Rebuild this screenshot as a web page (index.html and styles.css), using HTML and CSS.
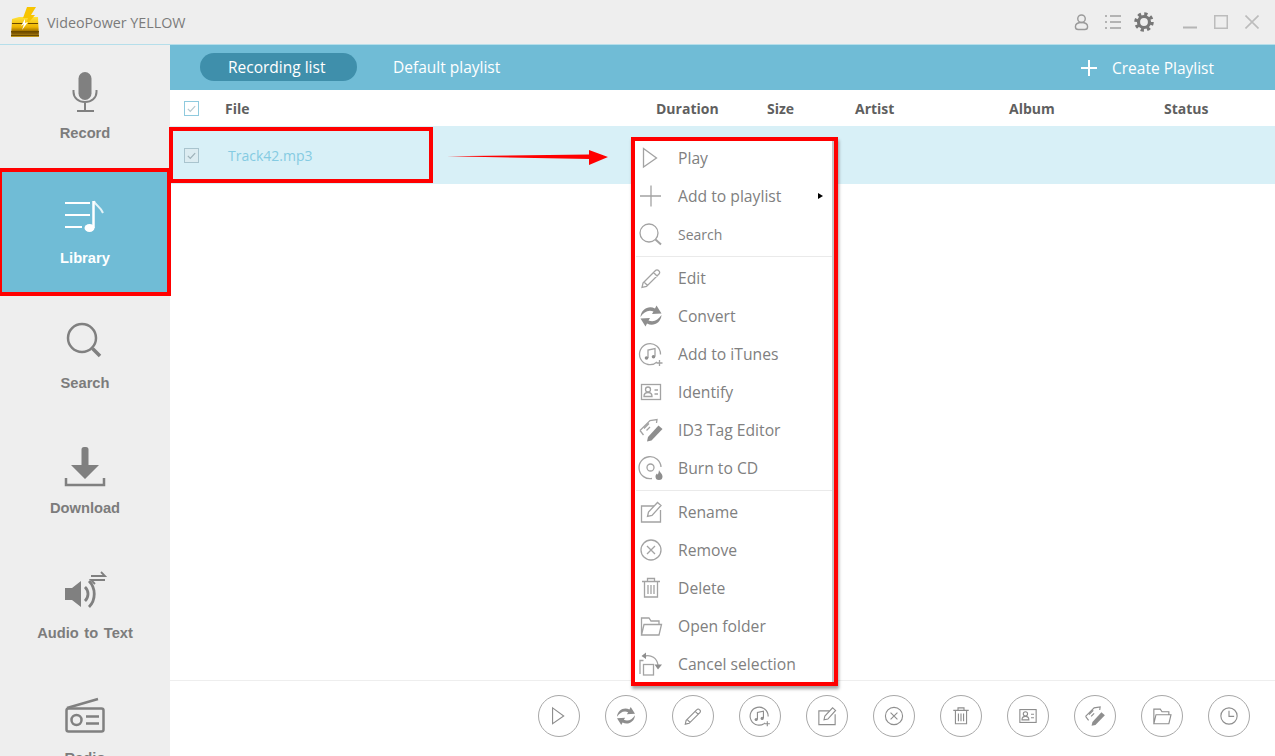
FILE: index.html
```html
<!DOCTYPE html>
<html lang="en">
<head>
<meta charset="utf-8">
<title>VideoPower YELLOW</title>
<link rel="stylesheet" href="styles.css">
</head>
<body>
<svg class="sprite" aria-hidden="true">
  <defs>
    <linearGradient id="gold" x1="0" y1="0" x2="0" y2="1">
      <stop offset="0" stop-color="#ffe23a"/><stop offset=".5" stop-color="#eeb400"/><stop offset=".8" stop-color="#7a5200"/><stop offset="1" stop-color="#c9a020"/>
    </linearGradient>
  </defs>
  <symbol id="i-play" viewBox="0 0 28 28"><path d="M6.500 4.500 19.500 14 6.500 23Z"/></symbol>
  <symbol id="i-plus" viewBox="0 0 28 28"><path d="M3 14H24M14 3.500V24.500"/></symbol>
  <symbol id="i-search" viewBox="0 0 28 28"><circle cx="12" cy="13" r="9"/><path d="M18.500 19.500 24 24.500" stroke-width="2"/></symbol>
  <symbol id="i-edit" viewBox="0 0 28 28"><path d="M6 19 18.500 6.500a2 2 0 0 1 3 0l.5.500a2 2 0 0 1 0 3L9.500 22.500 5 23.500ZM16.500 8.500l4 4M7 18l3.500 3.500"/></symbol>
  <symbol id="i-convert" viewBox="0 0 28 28"><path class="solid" d="M3.500 15C4 7 12 3 18 6.500L19.500 3.500 24.500 11.500 15 12 16.500 9.500C11 7.500 7 10 3.500 15ZM24.500 13C24 21 16 25 10 21.500L8.500 24.500 3.500 16.500 13 16 11.500 18.500C17 20.500 21 18 24.500 13Z"/></symbol>
  <symbol id="i-itunes" viewBox="0 0 28 28"><path d="M20 22A10.500 10.500 0 1 1 23.500 14.500"/><path d="M11 18V10L18 8.500V16.500"/><circle class="solid" cx="9.500" cy="18" r="1.800"/><circle class="solid" cx="16.500" cy="16.800" r="1.800"/><path d="M22.500 20V26M19.500 23H25.500"/></symbol>
  <symbol id="i-identify" viewBox="0 0 28 28"><rect x="4.500" y="6.500" width="19" height="15"/><circle cx="11" cy="11.500" r="2.500"/><path d="M7 18.500c0-3 2-4 4-4s4 1 4 4ZM17.500 12H21M17.500 16H21"/></symbol>
  <symbol id="i-id3" viewBox="0 0 28 28"><path d="M3 14.500 13 4.500 20 3.500 19.500 7M6.500 19 3 14.500M7 12.500l5-5M9.500 14.500l3.500-3.500"/><path class="solid" d="M10 25.500 11 21 21.500 9.500 25.500 13 14.500 24.500Z"/></symbol>
  <symbol id="i-burn" viewBox="0 0 28 28"><path d="M15 24.500A11 11 0 1 1 24 13"/><circle cx="13.500" cy="13.500" r="3.500"/><path class="solid" d="M22 16c.5 2 3.500 3.500 3.500 6.500a3.500 3.500 0 0 1-7 0c0-1.500.8-2.500 1.500-3l.8 1.200C21.500 19 22 17.500 22 16Z"/></symbol>
  <symbol id="i-rename" viewBox="0 0 28 28"><path d="M17 8H4.500V24H23.500V12"/><path d="M10.500 18.500 11.500 14 20.500 4.500 24 7.500 15 17.500Z"/></symbol>
  <symbol id="i-remove" viewBox="0 0 28 28"><circle cx="14" cy="14" r="10"/><path d="M10 10 18 18M18 10 10 18"/></symbol>
  <symbol id="i-delete" viewBox="0 0 28 28"><path d="M7.500 8V23H20.500V8M5 7.500H23M10.500 7V4.500H17.500V7M11 11V20M14 11V20M17 11V20"/></symbol>
  <symbol id="i-folder" viewBox="0 0 28 28"><path d="M4.500 23V6H12L14 9H22V12.500M4.500 23H22L24.500 12.500H7L4.500 23Z"/></symbol>
  <symbol id="i-cancel" viewBox="0 0 28 28"><rect x="6.500" y="14.500" width="10" height="10.500"/><path d="M3 24V10.500H6.500M8 6C14 4.500 20 8 21 15"/><path class="solid" d="M9 2.500V9L4.500 6ZM17.500 14.500H25L21 19.500Z"/></symbol>
  <symbol id="i-clock" viewBox="0 0 28 28"><circle cx="14" cy="14" r="9.500"/><path d="M14 8V14.500H20"/></symbol>
</svg>

<header class="titlebar">
  <svg class="logo" viewBox="0 0 30 30">
    <path fill="url(#gold)" d="M2 12 9 10 28 10 29 30H1Z"/>
    <path fill="#6b4a00" d="M1 24H29V25.500H1ZM1 28H29V29H1ZM2 16H28V17H2Z"/>
    <path fill="#f7c400" d="M17 0H26L21 8H25L15 20 18 11H13Z"/>
    <path fill="#fff" d="M15 12 11 19 14 17 12 23 18 15 15 16Z"/>
  </svg>
  <span class="apptitle">VideoPower YELLOW</span>
  <div class="winctl">
    <svg class="tb-icon user" viewBox="0 0 16 18"><circle cx="8" cy="5.500" r="4"/><path d="M8 9.500c-4 0-6.500 2-6.500 4.500 0 2 1 3 3 3h7c2 0 3-1 3-3 0-2.500-2.500-4.500-6.500-4.500Z"/></svg>
    <svg class="tb-icon list" viewBox="0 0 18 16"><path d="M1 2H3M6 2H17M1 8H3M6 8H17M1 14H3M6 14H17"/></svg>
    <svg class="tb-icon gear" viewBox="0 0 20 20"><circle class="gear-teeth" cx="10" cy="10" r="8"/><circle class="gear-ring" cx="10" cy="10" r="5.500"/></svg>
    <svg class="tb-icon min" viewBox="0 0 14 14"><path d="M0 12.500H14"/></svg>
    <svg class="tb-icon max" viewBox="0 0 14 14"><path d="M.75.75H13.250V13.250H.75Z"/></svg>
    <svg class="tb-icon close" viewBox="0 0 14 14"><path d="M.5.500 13.500 13.500M13.500.500 .5 13.500"/></svg>
  </div>
</header>

<div class="shell">
  <nav class="sidebar">
    <a class="nav-item">
      <svg class="nav-icon" viewBox="0 0 44 44"><rect class="fill" x="15.500" y="2" width="13" height="28" rx="6.500"/><path d="M10.500 20v2c0 6 5 10 11.500 10S33.500 28 33.500 22v-2M22 32V41M14 41H31" stroke-width="2"/></svg>
      <span>Record</span>
    </a>
    <a class="nav-item active">
      <svg class="nav-icon" viewBox="0 0 44 44"><path d="M2 8H27M2 20H27M2 32H19" stroke-width="2"/><path d="M30.500 33V6" stroke-width="2.500"/><ellipse class="fill" cx="26.500" cy="33" rx="5" ry="4"/><path d="M31 6c1 4 6 5 9 12" stroke-width="2" opacity=".8"/></svg>
      <span>Library</span>
    </a>
    <a class="nav-item">
      <svg class="nav-icon" viewBox="0 0 44 44"><circle cx="19" cy="18" r="14"/><path d="M29.500 28.500 37 36" stroke-width="3.500"/></svg>
      <span>Search</span>
    </a>
    <a class="nav-item">
      <svg class="nav-icon" viewBox="0 0 44 44"><path class="fill" d="M18.500 2.500a2.500 2.500 0 0 1 2.500-2.500h2a2.500 2.500 0 0 1 2.500 2.500V18H36L22 32 8 18H18.500Z" transform="translate(0 2)"/><path d="M3 33V40H41V33"/></svg>
      <span>Download</span>
    </a>
    <a class="nav-item">
      <svg class="nav-icon" viewBox="0 0 44 44"><path class="fill" d="M2 18H9L18 11V37L9 30H2Z"/><path d="M22 17c4 4 4 10 0 14M26 11c7 7 7 19 0 26" stroke-width="2.800"/><path d="M28 7H42L38 3M42 11H28L32 15" stroke-width="1.800" transform="translate(0 -1)"/></svg>
      <span>Audio to Text</span>
    </a>
    <a class="nav-item">
      <svg class="nav-icon" viewBox="0 0 44 44"><rect x="3.500" y="13.500" width="37" height="23" rx="2"/><circle cx="13.500" cy="25" r="5"/><path d="M4 13 35 4M23 21.500H36M23 28.500H36"/></svg>
      <span>Radio</span>
    </a>
  </nav>

  <main class="content">
    <div class="tabs">
      <span class="tab current">Recording list</span>
      <span class="tab">Default playlist</span>
      <span class="create">
        <svg class="create-plus" viewBox="0 0 16 16"><path d="M0 8H16M8 0V16"/></svg>
        Create Playlist
      </span>
    </div>

    <div class="thead">
      <span class="check"><svg viewBox="0 0 16 16"><path d="M3.500 8.500 6.500 11.500 12.500 5"/></svg></span>
      <span>File</span><span>Duration</span><span>Size</span><span>Artist</span><span>Album</span><span>Status</span>
    </div>
    <div class="row">
      <span class="check grey"><svg viewBox="0 0 16 16"><path d="M3.500 8.500 6.500 11.500 12.500 5"/></svg></span>
      <span class="fname">Track42.mp3</span>
    </div>
    <div class="list-space"></div>

    <div class="actions">
      <button class="round"><svg><use href="#i-play"/></svg></button>
      <button class="round"><svg><use href="#i-convert"/></svg></button>
      <button class="round"><svg><use href="#i-edit"/></svg></button>
      <button class="round"><svg><use href="#i-itunes"/></svg></button>
      <button class="round"><svg><use href="#i-rename"/></svg></button>
      <button class="round"><svg><use href="#i-remove"/></svg></button>
      <button class="round"><svg><use href="#i-delete"/></svg></button>
      <button class="round"><svg><use href="#i-identify"/></svg></button>
      <button class="round"><svg><use href="#i-id3"/></svg></button>
      <button class="round"><svg><use href="#i-folder"/></svg></button>
      <button class="round"><svg><use href="#i-clock"/></svg></button>
    </div>
  </main>
</div>

<div class="mark mark-library"></div>
<div class="mark mark-row"></div>
<svg class="arrow" viewBox="0 0 170 20"><path d="M0 7.200 142 5.500 142 1 161 8 142 16 142 10Z"/></svg>

<div class="menu">
  <div class="group">
    <div class="item"><svg><use href="#i-play"/></svg>Play</div>
    <div class="item"><svg><use href="#i-plus"/></svg>Add to playlist<i class="caret"></i></div>
    <div class="item small"><svg><use href="#i-search"/></svg>Search</div>
  </div>
  <div class="group">
    <div class="item"><svg><use href="#i-edit"/></svg>Edit</div>
    <div class="item"><svg><use href="#i-convert"/></svg>Convert</div>
    <div class="item"><svg><use href="#i-itunes"/></svg>Add to iTunes</div>
    <div class="item"><svg><use href="#i-identify"/></svg>Identify</div>
    <div class="item"><svg><use href="#i-id3"/></svg>ID3 Tag Editor</div>
    <div class="item"><svg><use href="#i-burn"/></svg>Burn to CD</div>
  </div>
  <div class="group">
    <div class="item"><svg><use href="#i-rename"/></svg>Rename</div>
    <div class="item"><svg><use href="#i-remove"/></svg>Remove</div>
    <div class="item"><svg><use href="#i-delete"/></svg>Delete</div>
    <div class="item"><svg><use href="#i-folder"/></svg>Open folder</div>
    <div class="item"><svg><use href="#i-cancel"/></svg>Cancel selection</div>
  </div>
</div>
</body>
</html>
```
FILE: styles.css
```css
* { box-sizing: border-box; }
html, body { margin: 0; height: 756px; overflow: hidden; }
body { position: relative; width: 1275px; font-family: "Open Sans", "Noto Sans", sans-serif; font-size: 15px; color: #777; background: #fff; }
.sprite { position: absolute; width: 0; height: 0; }
symbol { overflow: visible; }
.solid { fill: currentColor; stroke: none; }

.titlebar { height: 45px; display: flex; align-items: center; background: #eee; border-bottom: 1px solid #b5deea; padding-left: 10px; }
.logo { width: 30px; height: 30px; margin-right: 7px; }
.apptitle { font-size: 14.300px; color: #7b7b7b; }
.winctl { margin-left: auto; display: flex; align-items: center; padding-right: 16px; }
.tb-icon { fill: none; stroke: #a8a8a8; stroke-width: 1.500; display: block; }
.user { width: 15px; height: 18px; stroke: #9a9a9a; margin-right: 15px; }
.list { width: 18px; height: 16px; stroke: #a0a0a0; stroke-width: 1.700; margin-right: 12px; }
.gear { width: 20px; height: 20px; margin-right: 29px; }
.gear-teeth { stroke: #777; stroke-width: 3.500; stroke-dasharray: 3.200 3.080; }
.gear-ring { stroke: #777; stroke-width: 3.200; }
.min { width: 14px; height: 14px; margin-right: 17px; stroke: #b5b5b5; stroke-width: 2; }
.max { width: 14px; height: 14px; margin-right: 17px; stroke: #bcbcbc; }
.close { width: 14px; height: 14px; stroke: #bcbcbc; stroke-width: 1.600; }

.shell { display: flex; height: 711px; }
.sidebar { width: 170px; flex: none; background: #eee; overflow: hidden; }
.nav-item { display: flex; flex-direction: column; align-items: center; height: 125px; padding-top: 25px; font-family: "Liberation Sans", sans-serif; font-weight: 700; font-size: 14.700px; word-spacing: 1.500px; line-height: 20px; color: #7c7c7c; }
.nav-item span { margin-top: 8px; padding-top: 1px; }
.nav-item.active { background: #70bcd6; color: #fff; }
.nav-icon { width: 44px; height: 44px; fill: none; stroke: #808080; stroke-width: 2.500; overflow: visible; }
.nav-item.active .nav-icon { stroke: #fff; }
.nav-icon .fill { fill: #808080; stroke: none; }
.nav-item.active .nav-icon .fill { fill: #fff; }

.content { flex: 1; display: flex; flex-direction: column; min-width: 0; }
.tabs { height: 45px; flex: none; background: #70bcd6; color: #fff; font-size: 15.500px; display: flex; align-items: center; padding-left: 30px; position: relative; }
.tab { height: 28px; line-height: 28px; padding: 0 28px; border-radius: 14px; width: 157px; white-space: nowrap; margin-top: -1px; }
.tab.current { background: #3f8fab; }
.tab + .tab { margin-left: 8px; }
.create { margin-left: auto; margin-right: 61px; display: flex; align-items: center; padding-top: 1px; }
.create-plus { width: 16px; height: 16px; margin-right: 15px; fill: none; stroke: #fff; stroke-width: 2; }

.thead { height: 36px; flex: none; display: grid; grid-template-columns: 55px 431px 111px 88px 154px 155px 1fr; align-items: center; padding-left: 0; font-weight: 700; font-size: 14px; color: #5f5f5f; }
.check { width: 15px; height: 15px; margin-left: 14px; border: 1px solid #8fcade; display: block; }
.check svg { display: block; width: 13px; height: 13px; fill: none; stroke: #b5c8cf; stroke-width: 1.500; }
.check.grey { border-color: #a9c4ce; flex: none; background: #dcecf1; }
.check.grey svg { stroke: #9db1b8; }
.row { height: 58px; flex: none; background: #d8f0f7; display: flex; align-items: center; }
.fname { margin-left: 29px; font-size: 14px; color: #85cbe2; }
.list-space { flex: 1; }

.actions { height: 76px; flex: none; border-top: 1px solid #eee; display: flex; justify-content: flex-end; gap: 25px; padding: 14px 25px 0 0; }
.round { width: 42px; height: 42px; padding: 0; border: 1.500px solid #a8a8a8; border-radius: 50%; background: #fff; display: flex; align-items: center; justify-content: center; color: #8e8e8e; }
.round svg { width: 24px; height: 24px; fill: none; stroke: #8e8e8e; stroke-width: 1.300; }

.mark { position: absolute; border: 4px solid #f00; }
.mark-library { left: -2px; top: 168px; width: 173px; height: 128px; }
.mark-row { left: 169px; top: 127px; width: 264px; height: 56px; }
.arrow { position: absolute; left: 447px; top: 149px; width: 170px; height: 20px; fill: #f00; }

.menu { position: absolute; left: 631px; top: 137px; width: 207px; height: 549px; background: #fff; border: 4px solid #f00; box-shadow: inset -2px 0 0 #c4c4c4, 1px 3px 3px rgba(0, 0, 0, .35); }
.group { display: flex; flex-direction: column; gap: 4px; padding-bottom: 4px; }
.group + .group { margin-top: 1px; position: relative; padding-top: 4px; }
.group + .group::before { content: ""; position: absolute; top: -1px; left: 1px; right: 2px; height: 1px; background: #eaeaea; }
.group:first-child { padding-bottom: 5px; }
.group:nth-child(2) { padding-bottom: 5px; }
.item { height: 34px; display: flex; align-items: center; padding-left: 2px; font-size: 15.700px; color: #808080; position: relative; white-space: nowrap; }
.item svg { width: 28px; height: 28px; flex: none; margin-right: 13px; fill: none; stroke: #a3a3a3; stroke-width: 1.300; color: #8e8e8e; }
.item.small { font-size: 14px; }
.caret { position: absolute; left: 183px; top: 14px; border-left: 5px solid #000; border-top: 3px solid transparent; border-bottom: 3px solid transparent; }
```
